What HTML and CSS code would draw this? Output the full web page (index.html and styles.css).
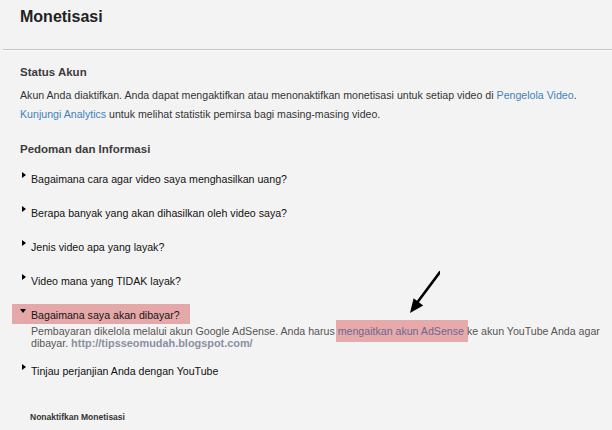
FILE: index.html
```html
<!DOCTYPE html>
<html lang="id">
<head>
<meta charset="utf-8">
<title>Monetisasi</title>
<link rel="stylesheet" href="styles.css">
</head>
<body>
<header class="page-header">
  <h1 class="title">Monetisasi</h1>
</header>
<main class="content">
  <section class="status">
    <h2 class="section-title">Status Akun</h2>
    <p class="body-text">Akun Anda diaktifkan. Anda dapat mengaktifkan atau menonaktifkan monetisasi untuk setiap video di <a class="link" href="#">Pengelola Video</a>. <a class="link" href="#">Kunjungi Analytics</a> untuk melihat statistik pemirsa bagi masing-masing video.</p>
  </section>
  <section class="guide">
    <h2 class="section-title">Pedoman dan Informasi</h2>
    <ul class="faq">
      <li class="faq-item"><div class="faq-row"><span class="caret"></span><span>Bagaimana cara agar video saya menghasilkan uang?</span></div></li>
      <li class="faq-item"><div class="faq-row"><span class="caret"></span><span>Berapa banyak yang akan dihasilkan oleh video saya?</span></div></li>
      <li class="faq-item"><div class="faq-row"><span class="caret"></span><span>Jenis video apa yang layak?</span></div></li>
      <li class="faq-item"><div class="faq-row"><span class="caret"></span><span>Video mana yang TIDAK layak?</span></div></li>
      <li class="faq-item open">
        <div class="faq-row faq-head"><span class="caret down"></span><span>Bagaimana saya akan dibayar?</span></div>
        <p class="faq-body">Pembayaran dikelola melalui akun Google AdSense. Anda harus <span class="mark">mengaitkan akun AdSense</span> ke akun YouTube Anda agar dibayar. <span class="watermark">http://tipsseomudah.blogspot.com/</span></p>
      </li>
      <li class="faq-item last"><div class="faq-row"><span class="caret"></span><span>Tinjau perjanjian Anda dengan YouTube</span></div></li>
    </ul>
  </section>
  <p class="deactivate">Nonaktifkan Monetisasi</p>
</main>
<svg class="arrow" width="40" height="48" viewBox="400 268 40 48" aria-hidden="true">
  <line x1="440" y1="272" x2="415" y2="305.5" stroke="#000" stroke-width="2.6" stroke-linecap="round"/>
  <polygon points="410,313 413.6,298.2 423.2,305.4" fill="#000"/>
</svg>
</body>
</html>
```
FILE: styles.css
```css
html, body {
  margin: 0;
  padding: 0;
}

body {
  background: #f4f3f3;
  font-family: "Liberation Sans", Arial, sans-serif;
  color: #333;
  position: relative;
  width: 612px;
  height: 430px;
  overflow: hidden;
}

.page-header {
  margin-left: 3px;
  height: 49px;
  border-bottom: 1px solid #c4c4c4;
  box-shadow: 0 1px 0 #fbfbfb;
  padding-left: 17px;
}

.title {
  margin: 0;
  padding-top: 7px;
  font-size: 16px;
  line-height: 20px;
  font-weight: bold;
  color: #222;
}

.content {
  padding: 0 4px 0 20px;
}

.section-title {
  margin: 0;
  font-size: 11.5px;
  line-height: 14px;
  font-weight: bold;
  color: #3c3c3c;
}

.status {
  padding-top: 15px;
}

.body-text {
  margin: 7px 0 0;
  font-size: 10.62px;
  line-height: 19px;
  color: #333;
}

.link {
  color: #3b83bd;
  text-decoration: none;
}

.guide {
  margin-top: 18px;
}

.faq {
  list-style: none;
  margin: 16px 0 0;
  padding: 0;
}

.faq-item {
  margin-bottom: 20px;
  font-size: 10.62px;
  line-height: 14px;
  color: #111;
}

.faq-row {
  display: flex;
  align-items: flex-start;
}

.caret {
  flex: none;
  width: 0;
  height: 0;
  margin: 0 5px 0 2px;
  border-top: 3px solid transparent;
  border-bottom: 3px solid transparent;
  border-left: 4px solid #000;
}

.caret.down {
  margin: 1px 5px 0 0;
  border-left: 3px solid transparent;
  border-right: 3px solid transparent;
  border-top: 4px solid #000;
  border-bottom: 0;
}

.faq-head {
  width: fit-content;
  background: #e5a8a9;
  margin: -4px 0 -2px -8px;
  padding: 4px 10px 2px 8px;
  color: #1a1414;
}

.faq-item.open {
  margin-bottom: 15px;
}

.faq-body {
  margin: 4px 0 0;
  padding-left: 11px;
  font-size: 10.62px;
  line-height: 11.5px;
  color: #555;
}

.mark {
  background: #e6aaab;
  color: #6e6790;
  padding: 5px 4px 5px 2px;
  margin: 0 -4px 0 -2px;
}

.watermark {
  font-size: 10.9px;
  line-height: 11.5px;
  font-weight: bold;
  color: #8a90a2;
}

.faq-item.last {
  margin-bottom: 0;
}

.deactivate {
  margin: 34px 0 0 10px;
  font-size: 8.5px;
  line-height: 11px;
  font-weight: bold;
  color: #333;
}

.arrow {
  position: absolute;
  left: 400px;
  top: 268px;
}
```
